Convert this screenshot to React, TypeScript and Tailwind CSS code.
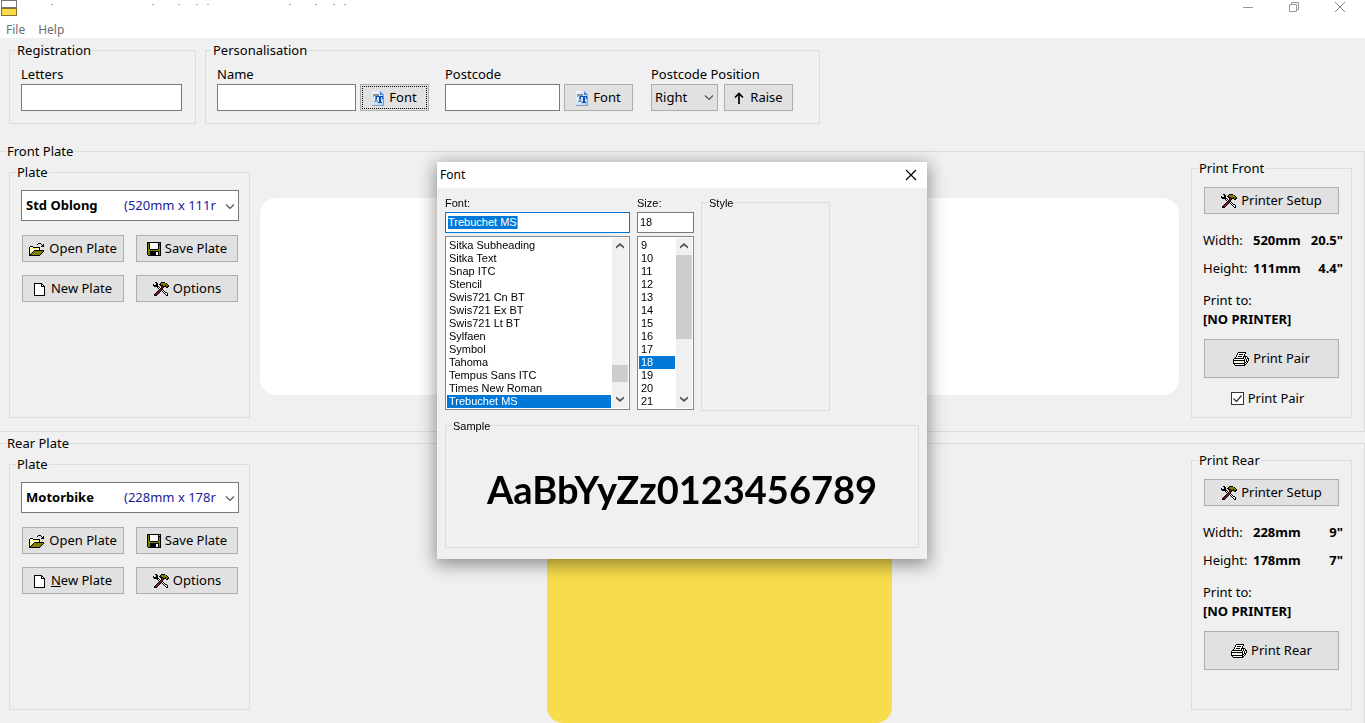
import { useState } from 'react'
import type { InputHTMLAttributes, ReactNode } from 'react'
import clsx from 'clsx'

const palette: Record<string, string> = {
  k: '#000000',
  w: '#ffffff',
  y: '#ffff66',
  o: '#808000',
  g: '#a0a0a0',
  r: '#7a1420',
}

const icons = {
  open: [
    '.........kkk....',
    '........k...k.k.',
    '.............kk.',
    '.kkk........kkk.',
    'kwywkkkkkkk.....',
    'kywywywywyk.....',
    'kwywywywywk.....',
    'kywywkkkkkkkkkk.',
    'kwywkoooooooook.',
    'kywkoooooooook..',
    'kwkoooooooook...',
    'kkoooooooook....',
    'kkkkkkkkkkk.....',
  ],
  save: [
    'kkkkkkkkkkkkkk',
    'kokwwwwwwwwkgk',
    'kokwwwwwwwwkkk',
    'kokwwwwwwwwkok',
    'kokwwwwwwwwkok',
    'kokwwwwwwwwkok',
    'kokwwwwwwwwkok',
    'kookkkkkkkkook',
    'kooooooooooook',
    'kookkkkkkkkkok',
    'kookkkkkkwwkok',
    'kookkkkkkwwkok',
    'kookkkkkkwwkok',
    '.kkkkkkkkkkkkk',
  ],
  page: [
    'kkkkkkkk.....',
    'kwwwwwwkk....',
    'kwwwwwwkwk...',
    'kwwwwwwkkkk..',
    'kwwwwwwwwwk..',
    'kwwwwwwwwwk..',
    'kwwwwwwwwwk..',
    'kwwwwwwwwwk..',
    'kwwwwwwwwwk..',
    'kwwwwwwwwwk..',
    'kwwwwwwwwwk..',
    'kwwwwwwwwwk..',
    'kkkkkkkkkkk..',
  ],
  tools: [
    '..kk....kkkk....',
    '...kk..koooook..',
    'k..kk.kkooooook.',
    'kkkkk..kkkookook',
    '.kkkkk..krkkkokk',
    '....kwk.krk..kk.',
    '.....kwkrk......',
    '......krrk......',
    '.....krrkwk.....',
    '....krrk.kwk....',
    '...krrk...kwkk..',
    '..krrk.....kwwk.',
    '.krrk.......kwk.',
    '.kkk.........kk.',
  ],
  printer: [
    '.....kkkkkkkk...',
    '....kwwwwwwwk...',
    '....kwkkkkwk....',
    '...kwwwwwwwk....',
    '...kwkkkkwkkkk..',
    '..kwwwwwwwkwkwk.',
    '.kkkkkkkkkkwkwkk',
    'kwwwwwwwwwwkwkwk',
    'kkkkkkkkkkkkwkwk',
    'kwwwwwyyywwkwkk.',
    'kwwwwwwwwwwkkwk.',
    'kkkkkkkkkkkkwk..',
    '.kwwwwwwwwwkk...',
    '..kkkkkkkkkk....',
  ],
}

function PixelIcon({ name }: { name: keyof typeof icons }) {
  const rows = icons[name]
  return (
    <svg width={rows[0].length} height={rows.length} shapeRendering="crispEdges" aria-hidden="true" className="flex-none">
      {rows.map((row, y) =>
        row.split('').map((c, x) => (c === '.' ? null : <rect key={`${x}-${y}`} x={x} y={y} width="1" height="1" fill={palette[c]} />)),
      )}
    </svg>
  )
}

function FontIcon() {
  return (
    <svg width="13" height="15" viewBox="0 0 13 15" aria-hidden="true" className="flex-none">
      <defs>
        <linearGradient id="sheet" x1="0" y1="0" x2="1" y2="1">
          <stop offset="0" stopColor="#f4f9ff" />
          <stop offset="1" stopColor="#a9cdf7" />
        </linearGradient>
      </defs>
      <path d="M0 0h8l4 4v11H0z" fill="url(#sheet)" />
      <path d="M8 0l4 4H8z" fill="#3d8be0" />
      <path d="M11.500 4v10.500H0" fill="none" stroke="#8a9db8" />
      <path d="M1 3h6v3H6V5H5v5h1v1H2v-1h1V5H2v1H1z" fill="#8b8f96" />
      <path d="M4 5h7v3h-1V6H9v5h1v1H6v-1h1V6H5v2H4z" fill="#0b4fb3" />
    </svg>
  )
}

function RaiseIcon() {
  return (
    <svg width="12" height="12" viewBox="0 0 12 12" aria-hidden="true" className="flex-none">
      <path d="M5 12V1.500M1 5.500l4-4 4 4" fill="none" stroke="#000" strokeWidth="1.700" />
    </svg>
  )
}

function Chevron({ className }: { className?: string }) {
  return (
    <svg width="10" height="6" viewBox="0 0 10 6" aria-hidden="true" className={clsx('pointer-events-none', className)}>
      <path d="M1 .5l4 4 4-4" fill="none" stroke="#555" strokeWidth="1.200" />
    </svg>
  )
}

function Group({ title, className, inner, children }: { title: string; className?: string; inner?: string; children?: ReactNode }) {
  return (
    <fieldset className={clsx('min-w-0 border border-[#dcdcdc]', className)}>
      <legend className="ml-1.5 px-px leading-4">{title}</legend>
      <div className={inner}>{children}</div>
    </fieldset>
  )
}

function Button({ className, focused, children }: { className?: string; focused?: boolean; children: ReactNode }) {
  return (
    <button
      type="button"
      className={clsx(
        'flex items-center justify-center gap-1 whitespace-nowrap border border-[#adadad] bg-[#e1e1e1] pt-px',
        focused && 'outline-1 -outline-offset-3 outline-dotted outline-black',
        className,
      )}
    >
      {children}
    </button>
  )
}

function Field({ id, label, className, ...rest }: { id: string; label: string } & InputHTMLAttributes<HTMLInputElement>) {
  return (
    <div>
      <label htmlFor={id} className="block leading-5">{label}</label>
      <input id={id} type="text" className={clsx('block h-[27px] border border-[#7a7a7a] bg-white px-1', className)} {...rest} />
    </div>
  )
}

const plates = [
  { name: 'Std Oblong', size: '(520mm x 111r' },
  { name: 'Motorbike', size: '(228mm x 178r' },
]

function PlatePanel({ id, initial, accessKey }: { id: string; initial: number; accessKey?: boolean }) {
  const [plate, setPlate] = useState(initial)
  return (
    <Group title="Plate" className="mt-[5px] min-h-[254px] w-[241px] flex-none" inner="pt-2.5 pr-2.5 pl-[11px]">
      <div className="relative flex h-[31px] items-center border border-[#7a7a7a] bg-white pl-1">
        <span className="w-[98px] flex-none font-bold">{plates[plate].name}</span>
        <span className="w-[100px] flex-none whitespace-nowrap text-[#1c1c96]">{plates[plate].size}</span>
        <Chevron className="mt-0.5 ml-px flex-none" />
        <select
          id={id}
          aria-label="Plate"
          value={plate}
          onChange={(e) => setPlate(Number(e.target.value))}
          className="absolute inset-0 w-full opacity-0"
        >
          {plates.map((p, i) => (
            <option key={p.name} value={i}>{p.name}</option>
          ))}
        </select>
      </div>
      <div className="mx-px mt-3.5 grid grid-cols-2 gap-x-3 gap-y-[13px]">
        <Button className="h-[27px]"><PixelIcon name="open" />Open Plate</Button>
        <Button className="h-[27px]"><PixelIcon name="save" />Save Plate</Button>
        <Button className="h-[27px]">
          <PixelIcon name="page" />
          <span>{accessKey ? <><u>N</u>ew Plate</> : 'New Plate'}</span>
        </Button>
        <Button className="h-[27px]"><PixelIcon name="tools" />Options</Button>
      </div>
    </Group>
  )
}

type PrintPanelProps = {
  title: string
  action: string
  width: [string, string]
  height: [string, string]
  children?: ReactNode
}

function PrintPanel({ title, action, width, height, children }: PrintPanelProps) {
  return (
    <Group title={title} className="mt-px mr-3 w-[161px] flex-none" inner="px-3 pt-[11px]">
      <Button className="h-[27px] w-full"><PixelIcon name="tools" />Printer Setup</Button>
      <dl className="-mx-1 mt-3 pl-[3px] leading-7">
        <div className="flex">
          <dt className="w-[50px]">Width:</dt>
          <dd className="flex flex-1 justify-between font-bold"><span>{width[0]}</span><span>{width[1]}</span></dd>
        </div>
        <div className="flex">
          <dt className="w-[50px]">Height:</dt>
          <dd className="flex flex-1 justify-between font-bold"><span>{height[0]}</span><span>{height[1]}</span></dd>
        </div>
      </dl>
      <p className="mt-[9px] -ml-px leading-[19px]">
        Print to:
        <br />
        <b>[NO PRINTER]</b>
      </p>
      <Button className="mt-2.5 h-[39px] w-full"><PixelIcon name="printer" />{action}</Button>
      {children}
    </Group>
  )
}

function ScrollArrow({ down }: { down?: boolean }) {
  return (
    <button type="button" aria-label={down ? 'Scroll down' : 'Scroll up'} className="flex h-[17px] items-center justify-center">
      <svg width="8" height="6" viewBox="0 0 8 6" className={clsx(down && 'rotate-180')}>
        <path d="M0 5.500V3.500L4 0l4 3.500V5.500L4 2.500z" fill="#555" />
      </svg>
    </button>
  )
}

type ListBoxProps = {
  label: string
  items: string[]
  value: string
  onSelect: (item: string) => void
  above: string
  thumb: string
}

function ListBox({ label, items, value, onSelect, above, thumb }: ListBoxProps) {
  return (
    <div className="mt-[3px] flex h-[174px] border border-[#828790] bg-white p-px">
      <ul role="listbox" aria-label={label} className="min-w-0 flex-1 py-px">
        {items.map((item) => (
          <li
            key={item}
            role="option"
            aria-selected={item === value}
            onClick={() => onSelect(item)}
            className={clsx('pl-0.5 leading-[13px] whitespace-nowrap', item === value && 'bg-[#0078d7] text-white')}
          >
            {item}
          </li>
        ))}
      </ul>
      <div className="ml-px flex w-4 flex-none flex-col bg-[#f0f0f0]">
        <ScrollArrow />
        <div className={above} />
        <div className={clsx('bg-[#cdcdcd]', thumb)} />
        <div className="flex-1" />
        <ScrollArrow down />
      </div>
    </div>
  )
}

const fonts = [
  'Sitka Subheading',
  'Sitka Text',
  'Snap ITC',
  'Stencil',
  'Swis721 Cn BT',
  'Swis721 Ex BT',
  'Swis721 Lt BT',
  'Sylfaen',
  'Symbol',
  'Tahoma',
  'Tempus Sans ITC',
  'Times New Roman',
  'Trebuchet MS',
]

const sizes = ['9', '10', '11', '12', '13', '14', '15', '16', '17', '18', '19', '20', '21']

function FontDialog() {
  const [font, setFont] = useState('Trebuchet MS')
  const [size, setSize] = useState('18')
  return (
    <div className="fixed inset-0 flex items-center justify-center pr-px pb-[3px]">
      <div
        role="dialog"
        aria-label="Font"
        className="w-[490px] bg-[#f0f0f0] px-2 pb-[11px] font-['Liberation_Sans',sans-serif] text-[11px] shadow-[0_4px_16px_2px_rgba(0,0,0,0.4)]"
      >
        <div className="-mx-2 flex h-[26px] items-center justify-between bg-white pr-2.5 pl-[3px] font-['Noto_Sans',sans-serif] text-[12px]">
          <h2>Font</h2>
          <button type="button" aria-label="Close">
            <svg width="12" height="12" viewBox="0 0 12 12">
              <path d="M1 1l10 10M11 1L1 11" stroke="#000" strokeWidth="1.200" />
            </svg>
          </button>
        </div>
        <div className="flex gap-[7px] pt-[7px]">
          <div className="w-[185px]">
            <label htmlFor="font-name" className="mb-px block leading-4">Font:</label>
            <div className="relative">
              <input
                id="font-name"
                value={font}
                onChange={(e) => setFont(e.target.value)}
                className="block h-[21px] w-full border border-[#0078d7] bg-white px-0.5 text-transparent outline-none"
              />
              {/* highlighted text over the edit box */}
              <span aria-hidden="true" className="pointer-events-none absolute top-1 left-[3px] border-r border-[#ff8728] bg-[#0078d7] leading-[13px] text-white">
                {font}
              </span>
            </div>
            <ListBox label="Font" items={fonts} value={font} onSelect={setFont} above="h-[110px]" thumb="h-[17px]" />
          </div>
          <div className="w-[57px]">
            <label htmlFor="font-size" className="mb-px block leading-4">Size:</label>
            <input
              id="font-size"
              value={size}
              onChange={(e) => setSize(e.target.value)}
              className="block h-[21px] w-full border border-[#7a7a7a] bg-white px-0.5 outline-none"
            />
            <ListBox label="Size" items={sizes} value={size} onSelect={setSize} above="h-0" thumb="h-[84px]" />
          </div>
          <Group title="Style" className="-mb-px w-[129px]" />
        </div>
        <Group title="Sample" className="mt-2 h-[130px]">
          <p className="flex h-[112px] items-center justify-center font-['Lato',sans-serif] text-[38px] font-bold text-black">
            AaBbYyZz0123456789
          </p>
        </Group>
      </div>
    </div>
  )
}

function TitleBar() {
  return (
    <header className="bg-white text-[12px] text-[#6d6d6d]">
      <div className="flex h-[22px] items-start">
        <svg width="17" height="16" viewBox="0 0 17 16" shapeRendering="crispEdges" className="ml-px" aria-hidden="true">
          <rect x="0.500" y="0.500" width="15" height="7" fill="#fff" stroke="#777" />
          <rect x="0.500" y="8.500" width="15" height="7" fill="#f8dc4c" stroke="#857322" />
        </svg>
        <svg width="330" height="16" viewBox="18 0 330 16" shapeRendering="crispEdges" aria-hidden="true">
          <path
            d="M51 4.500h2M152 4.500h2M178 4.500h2M196 4.500h2M207 4.500h2M289 4.500h2M315 4.500h2M333 4.500h2M344 4.500h2"
            stroke="#aaa"
          />
        </svg>
        <div className="mr-[19px] ml-auto flex gap-[34px] pt-0.5">
          <button type="button" aria-label="Minimise">
            <svg width="12" height="11" viewBox="0 0 12 11"><path d="M1 5.500h10" stroke="#999" /></svg>
          </button>
          <button type="button" aria-label="Restore">
            <svg width="12" height="11" viewBox="0 0 12 11">
              <path d="M1.500 2.500h7v7h-7zM3.500 2.500v-2h7v7h-2" fill="none" stroke="#999" />
            </svg>
          </button>
          <button type="button" aria-label="Close window">
            <svg width="12" height="11" viewBox="0 0 12 11"><path d="M1 0l10 10M11 0L1 10" stroke="#888" /></svg>
          </button>
        </div>
      </div>
      <nav className="flex h-4 items-center gap-[13px] pl-1.5">
        <button type="button">File</button>
        <button type="button">Help</button>
      </nav>
    </header>
  )
}

export default function App() {
  return (
    <div className="flex h-screen flex-col overflow-hidden bg-[#f0f0f0] font-['Noto_Sans',sans-serif] text-[13px] text-black">
      <TitleBar />
      <main className="flex-1">
        <div className="flex gap-[9px] pt-1 pl-[9px]">
          <Group title="Registration" inner="pt-1.5 pr-[13px] pb-3 pl-[11px]">
            <Field id="letters" label="Letters" className="w-[161px]" />
          </Group>
          <Group title="Personalisation" inner="pt-1.5 pr-[26px] pb-3 pl-[11px]">
            <div className="flex items-end">
              <Field id="name" label="Name" className="w-[139px]" />
              <Button focused className="ml-1 h-[27px] w-[69px]"><FontIcon />Font</Button>
              <div className="ml-4">
                <Field id="postcode" label="Postcode" className="w-[115px]" />
              </div>
              <Button className="ml-1 h-[27px] w-[69px]"><FontIcon />Font</Button>
              <div className="ml-[18px]">
                <label htmlFor="position" className="block leading-5">Postcode Position</label>
                <div className="flex gap-1.5">
                  <div className="relative w-[67px]">
                    <select
                      id="position"
                      defaultValue="Right"
                      className="block h-[27px] w-full appearance-none border border-[#adadad] bg-[#e1e1e1] pt-px pl-[3px]"
                    >
                      <option>Left</option>
                      <option>Centre</option>
                      <option>Right</option>
                    </select>
                    <Chevron className="absolute top-[11px] right-1" />
                  </div>
                  <Button className="h-[27px] w-[69px]"><RaiseIcon />Raise</Button>
                </div>
              </div>
            </div>
          </Group>
        </div>

        <Group title="Front Plate" className="mt-[19px] border-l-0" inner="flex pb-[13px] pl-[9px]">
          <PlatePanel id="front-plate" initial={0} />
          <div className="flex flex-1 items-center pt-4 pr-3 pl-2.5">
            <div className="aspect-[520/111] w-full rounded-2xl bg-white" />
          </div>
          <PrintPanel title="Print Front" action="Print Pair" width={['520mm', '20.5"']} height={['111mm', '4.4"']}>
            <label className="mt-2.5 flex items-center justify-center gap-1 pr-2 leading-5">
              <span className="relative flex">
                <input type="checkbox" defaultChecked className="peer size-[13px] appearance-none border border-[#333] bg-white" />
                <svg width="13" height="13" viewBox="0 0 13 13" className="pointer-events-none absolute inset-0 hidden peer-checked:block">
                  <path d="M2.500 6.500l3 3 5-6" fill="none" stroke="#333" strokeWidth="1.200" />
                </svg>
              </span>
              Print Pair
            </label>
          </PrintPanel>
        </Group>

        <Group title="Rear Plate" className="mt-[3px] border-b-0 border-l-0" inner="flex pb-[13px] pl-[9px]">
          <PlatePanel id="rear-plate" initial={1} accessKey />
          <div className="flex flex-1 items-end justify-center pr-3 pl-2.5">
            <div className="-mb-[13px] aspect-[228/178] h-[269px] rounded-2xl bg-[#f8dc4c]" />
          </div>
          <PrintPanel title="Print Rear" action="Print Rear" width={['228mm', '9"']} height={['178mm', '7"']} />
        </Group>
      </main>
      <FontDialog />
    </div>
  )
}
